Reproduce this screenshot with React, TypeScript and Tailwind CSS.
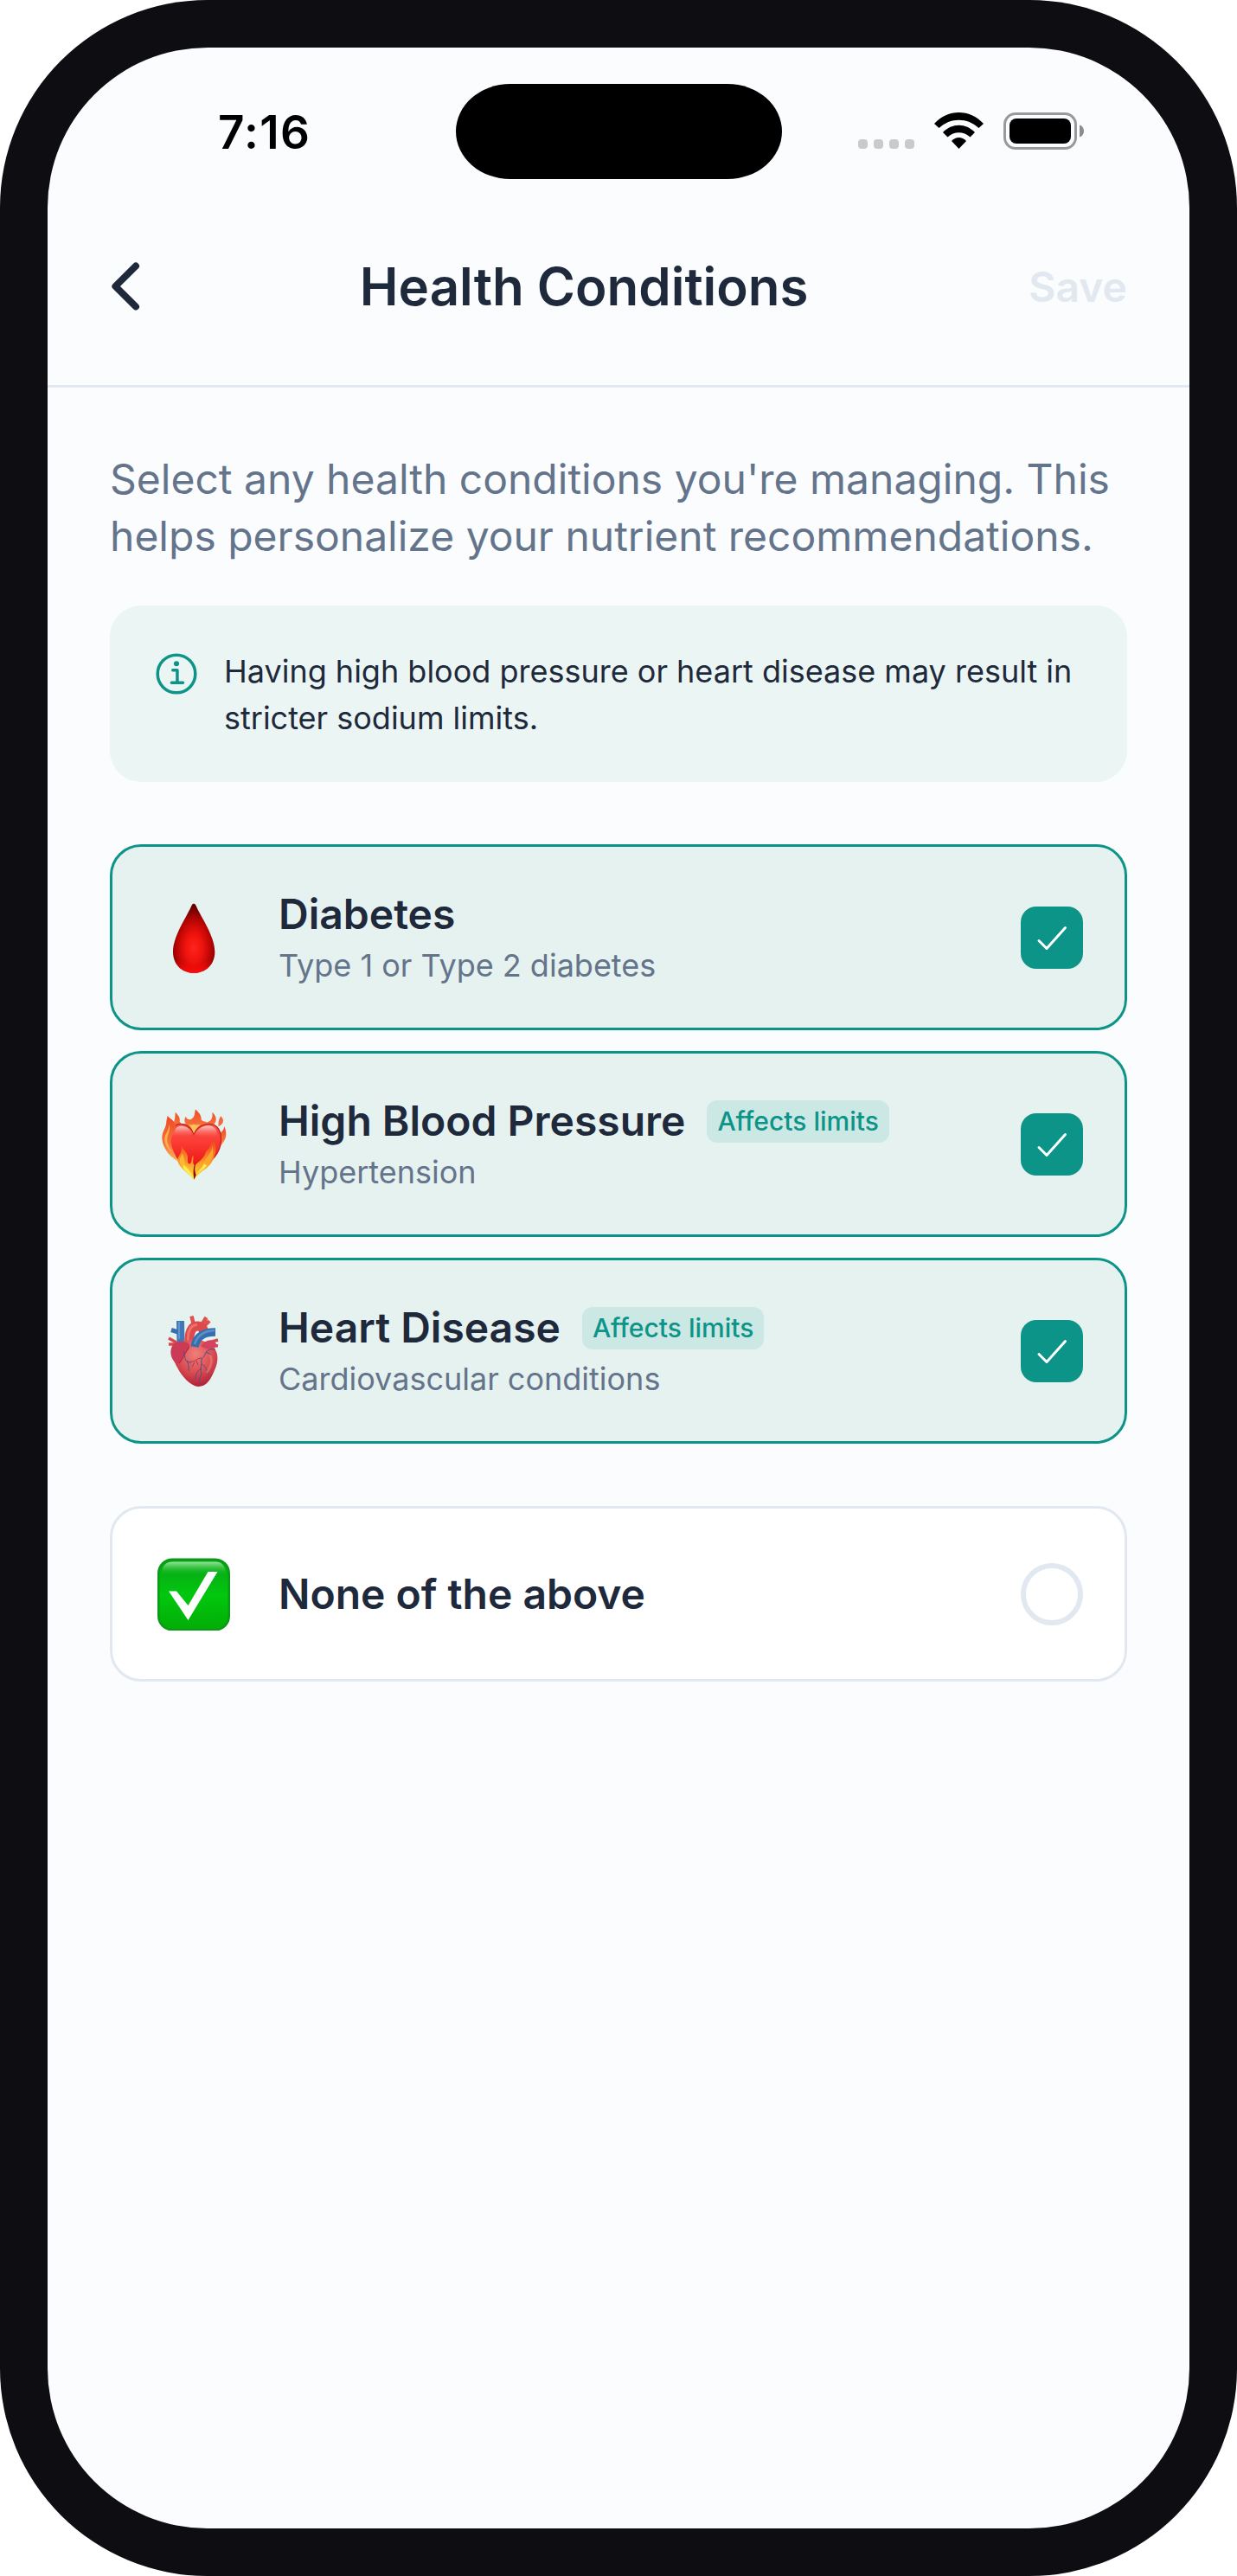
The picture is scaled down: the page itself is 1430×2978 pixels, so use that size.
import type { ReactNode } from "react";

interface Condition {
  name: string;
  description: string;
  icon: ReactNode;
  affectsLimits?: boolean;
}

function BloodDropIcon() {
  return (
    <svg viewBox="36 94.5 252 252" className="size-[84px]">
      <defs>
        <radialGradient id="drop" cx="0.5" cy="0.64" r="0.6">
          <stop offset="0" stopColor="#ff241c" />
          <stop offset="0.35" stopColor="#ee120e" />
          <stop offset="0.68" stopColor="#b80503" />
          <stop offset="1" stopColor="#620000" />
        </radialGradient>
        <linearGradient id="dropBase" x1="0" y1="0" x2="0" y2="1">
          <stop offset="0.82" stopColor="#f80c0a" stopOpacity="0" />
          <stop offset="1" stopColor="#fb0d0b" />
        </linearGradient>
      </defs>
      <path
        d="M155 108C158 101 166 101 169 108C186 148 235 214 235 270C235 314 203 343 162.500 343C122 343 90 314 90 270C90 214 139 146 155 108Z"
        fill="url(#drop)"
      />
      <path
        d="M155 108C158 101 166 101 169 108C186 148 235 214 235 270C235 314 203 343 162.500 343C122 343 90 314 90 270C90 214 139 146 155 108Z"
        fill="url(#dropBase)"
      />
    </svg>
  );
}

function FlamingHeartIcon() {
  return (
    <svg viewBox="36 61.5 252 252" className="size-[84px]">
      <defs>
        <linearGradient id="flame" x1="0" y1="0" x2="0" y2="1">
          <stop offset="0" stopColor="#f04a26" />
          <stop offset="0.6" stopColor="#f6703a" />
          <stop offset="1" stopColor="#fdb75c" />
        </linearGradient>
        <linearGradient id="flameLow" x1="0" y1="0" x2="0" y2="1">
          <stop offset="0" stopColor="#ee3b1c" />
          <stop offset="0.5" stopColor="#fa8a28" />
          <stop offset="1" stopColor="#ffe83d" />
        </linearGradient>
        <linearGradient id="heart" x1="0" y1="0" x2="0" y2="1">
          <stop offset="0" stopColor="#f5544c" />
          <stop offset="0.35" stopColor="#fb3b34" />
          <stop offset="0.7" stopColor="#ee1c1a" />
          <stop offset="1" stopColor="#9c0805" />
        </linearGradient>
        <linearGradient id="gloss" x1="0" y1="0" x2="0" y2="1">
          <stop offset="0" stopColor="#ffd9d6" stopOpacity="0.9" />
          <stop offset="1" stopColor="#ff5a52" stopOpacity="0" />
        </linearGradient>
      </defs>
      {/* flames behind the heart */}
      <path
        d="M92 128C92 112 98 98 98 76C110 88 116 98 113 108L119 116L134 116C128 106 130 98 134 91C138 103 150 104 155 98C168 91 164 78 168 66C179 77 189 86 188 101C191 107 201 107 208 111C222 106 229 99 226 76C238 87 242 98 238 109C234 118 226 122 224 130L162 152Z"
        fill="url(#flame)"
      />
      <path d="M256 89C264 98 266 105 262 113C258 120 252 123 248 125C246 114 248 99 256 89Z" fill="#f16a42" />
      <path d="M268 125C276 142 276 162 267 176C260 190 249 197 239 201L248 148C258 148 266 138 268 125Z" fill="url(#flame)" />
      <path
        d="M162 151C150 117 106 104 89 133C68 168 82 210 108 239C130 261 149 277 162 302C176 277 210 260 234 231C257 203 264 162 248 134C229 103 177 117 162 151Z"
        fill="url(#heart)"
        stroke="#c5201b"
        strokeWidth="4"
      />
      <path d="M158 153C148 124 114 114 97 134C88 147 91 160 101 162C120 165 142 157 158 153Z" fill="url(#gloss)" />
      <path d="M167 153C177 124 216 113 236 132C246 147 244 161 231 165C211 165 184 158 167 153Z" fill="url(#gloss)" />
      <path d="M162 118C150 122 146 118 143 117C152 126 158 137 162 149C168 136 175 126 186 118C176 119 171 122 162 118Z" fill="#fdc159" />
      {/* flame wrapping the left side */}
      <path
        d="M71 88C79 101 95 101 99 123C102 145 82 154 83 178C85 207 101 227 109 247C82 234 56 205 52 169C50 143 68 129 67 107Z"
        fill="url(#flame)"
      />
      <path d="M75 119C86 135 68 155 70 174C72 193 83 209 87 216C68 201 60 184 61 165C64 147 77 138 75 119Z" fill="#fcb04d" />
      {/* flames on the tip */}
      <path
        d="M118 192C125 207 144 217 141 239C140 249 143 257 149 254C158 249 151 235 160 226C163 241 155 250 164 260C178 250 194 238 202 220C208 205 216 205 221 190C227 180 225 172 228 165C239 184 242 206 234 226C230 246 216 263 204 272C187 283 174 293 163 311C153 296 133 285 119 268C105 250 102 239 112 225C120 213 121 203 118 192Z"
        fill="url(#flameLow)"
      />
      <path d="M164 260L170 252C164 266 164 278 170 294L163 310C160 285 160 275 164 260Z" fill="#8e0903" />
      <path d="M121 218C130 229 127 242 133 254C141 270 154 278 158 295C145 279 118 269 113 248C111 235 120 230 121 218Z" fill="#fdb832" />
      <path d="M225 190C230 213 209 227 199 245C189 260 177 267 172 286C191 278 218 258 226 232C231 215 229 204 225 190Z" fill="#fba62c" />
      <path d="M126 259C142 270 154 284 162 306C157 294 145 292 132 278C126 271 123 265 126 259ZM198 254C191 270 178 276 171 290C182 280 200 273 207 260Z" fill="#fff04e" />
    </svg>
  );
}

function AnatomicalHeartIcon() {
  return (
    <svg viewBox="0 0 84 84" className="size-[84px]" fill="none" strokeLinecap="butt">
      <defs>
        <radialGradient id="muscle" cx="0.5" cy="0.3" r="0.72">
          <stop offset="0" stopColor="#ef7f7c" />
          <stop offset="0.55" stopColor="#db4d51" />
          <stop offset="1" stopColor="#ad1d36" />
        </radialGradient>
      </defs>
      {/* small side vessels */}
      <path d="M13 27L22 32M13 34L22 34M63 31L70 29M63 35L70 36" stroke="#d7484c" strokeWidth="3.500" />
      <path d="M26.500 7L27 35" stroke="#4078b8" strokeWidth="9" />
      <path d="M24 20L16 17.500" stroke="#376eae" strokeWidth="5" />
      <path d="M25 8L25 28" stroke="#5f94cc" strokeWidth="2" />
      {/* aortic arch */}
      <path d="M39.500 1.500L42 12M56.500 3L51 12M60 7L54 13" stroke="#e0504d" strokeWidth="4.500" />
      <path d="M37 34C36 20 40 13 46 13C52 13 54 17 54 23" stroke="#dc4a4c" strokeWidth="11" />
      <path d="M35.500 31C34.500 20 38 11.500 46 11.500" stroke="#ee716c" strokeWidth="3" />
      <path
        d="M26 32C37 27 54 27 63 36C71 42 71 54 66 64C62 74 57 83 47 83C38 82 28 71 23 61C17 51 17 40 26 32Z"
        fill="url(#muscle)"
      />
      <path d="M17 36C22 29 31 30 37 34C38 42 31 43 29 51C27 56 24 57 21 56C15 49 14 43 17 36Z" fill="#cb3b56" />
      <path d="M50 36C57 27 66 27 69 36C65 41 55 40 50 36Z" fill="#d54360" />
      <path d="M43 37C45 25 53 20 67 20" stroke="#376eae" strokeWidth="9.500" />
      <path d="M43 34C46 24 54 18.500 66 18" stroke="#5b90c9" strokeWidth="2.500" />
      <path d="M37 37C32 43 30 50 25 56" stroke="#a6263d" strokeWidth="1" />
      <g stroke="#515083" strokeWidth="1">
        <path d="M30 42C33 48 30 51 35 55C37 59 35 63 37 65M34 53L39 56" />
        <path d="M67 40C54 38 57 47 51 51C51 60 49 62 51 69C48 73 48 77 49 79M51 62C45 65 44 70 44 75M51 57C57 60 57 65 59 69M56 43L62 46" />
      </g>
      <path d="M38 54C44 55 45 50 51 50M43 55L40 60M45 53L47 58" stroke="#a62c43" strokeWidth="0.9" />
      <path d="M60 46C65 52 61 61 57 67" stroke="#ed8583" strokeWidth="2.500" opacity="0.55" />
    </svg>
  );
}

function GreenCheckIcon() {
  return (
    <svg viewBox="0 0 84 84" className="size-[84px]">
      <defs>
        <linearGradient id="green" x1="0" y1="0" x2="0" y2="1">
          <stop offset="0" stopColor="#08a318" />
          <stop offset="0.5" stopColor="#02c70e" />
          <stop offset="1" stopColor="#02ad06" />
        </linearGradient>
        <linearGradient id="shine" x1="0" y1="0" x2="0" y2="1">
          <stop offset="0" stopColor="#96e69a" />
          <stop offset="1" stopColor="#1abf26" stopOpacity="0" />
        </linearGradient>
      </defs>
      <rect x="1.250" y="1.750" width="81.500" height="81.500" rx="16" fill="url(#green)" stroke="#0b9a17" strokeWidth="2.500" />
      <path d="M5 20C5 9 9 4.500 18 4.500H66C75 4.500 79 9 79 20Z" fill="url(#shine)" />
      <path d="M13 38.500H22L35.500 55L58.500 16H69.500L35.500 72Z" fill="#fff" />
    </svg>
  );
}

const conditions: Condition[] = [
  {
    name: "Diabetes",
    description: "Type 1 or Type 2 diabetes",
    icon: <BloodDropIcon />,
  },
  {
    name: "High Blood Pressure",
    description: "Hypertension",
    icon: <FlamingHeartIcon />,
    affectsLimits: true,
  },
  {
    name: "Heart Disease",
    description: "Cardiovascular conditions",
    icon: <AnatomicalHeartIcon />,
    affectsLimits: true,
  },
];

function StatusBar() {
  return (
    <div className="relative flex h-[186px] items-start justify-between pt-[67px] pr-[122px] pl-[197px]">
      <span className="-mt-1 text-[53px] leading-[70px] font-semibold tracking-[1.3px] text-black">7:16</span>

      {/* Dynamic island */}
      <div className="absolute top-[42px] left-[472px] h-[110px] w-[377px] rounded-[63px/55px] bg-black" />

      <div className="flex pt-2">
        <div className="flex gap-[7px] pt-[31px]">
          <span className="size-[11px] rounded-[4px] bg-[#c9cacc]" />
          <span className="size-[11px] rounded-[4px] bg-[#c9cacc]" />
          <span className="size-[11px] rounded-[4px] bg-[#c9cacc]" />
          <span className="size-[11px] rounded-[4px] bg-[#c9cacc]" />
        </div>
        <svg viewBox="0 0 57 42" className="ml-[23px] h-[42px] w-[57px]">
          <path d="M0 13C16 -4.300 41 -4.300 57 13L51.500 18C38.500 5.500 18.500 5.500 5.500 18Z" />
          <path d="M10 23C20.500 12 36.500 12 47 23L41.500 28.500C34 21.500 23 21.500 15.500 28.500Z" />
          <path d="M20 33C25 27.700 32 27.700 37 33L28.500 42Z" />
        </svg>
        <svg viewBox="0 0 93 43" className="ml-[23px] h-[43px] w-[93px]">
          <rect x="1.500" y="1.500" width="82" height="40" rx="12.500" fill="none" stroke="#98999b" strokeWidth="3" />
          <rect x="7" y="7" width="71" height="29" rx="8" />
          <path d="M88 14.500C91.300 15.500 93 18.200 93 21.500C93 24.800 91.300 27.500 88 28.500Z" fill="#8b8c8e" />
        </svg>
      </div>
    </div>
  );
}

function ConditionCard({ name, description, icon, affectsLimits }: Condition) {
  return (
    <div className="flex h-[215px] items-center rounded-[36px] border-[3px] border-[#0d9488] bg-[#e6f2f0] px-12">
      <div className="mr-[52px] flex w-[92px] shrink-0 justify-center">{icon}</div>
      <div className="flex-1 pb-px">
        <div className="flex items-center gap-[25px]">
          <h3 className="text-5xl leading-[58px] font-semibold text-[#1e293b]">{name}</h3>
          {affectsLimits && (
            <span className="rounded-xl bg-[#cce8e4] px-3 py-1.5 text-[30px] leading-[37px] font-medium text-[#0d9488]">
              Affects limits
            </span>
          )}
        </div>
        <p className="mt-2 text-4xl leading-[44px] text-[#64748b]">{description}</p>
      </div>
      <div className="size-[72px] rounded-[18px] bg-[#0d9488]">
        <svg viewBox="0 0 72 72" className="size-[72px]" fill="none">
          <path d="M21 39.500L30 48.500L51.500 24.500" stroke="#fff" strokeWidth="3" strokeLinecap="round" strokeLinejoin="round" />
        </svg>
      </div>
    </div>
  );
}

export default function App() {
  return (
    <div className="h-[2978px] w-[1430px] bg-white font-['Inter',sans-serif]">
      <div className="h-full overflow-hidden rounded-[240px] bg-[#0e0e12] p-[55px]">
        <div className="h-full rounded-[185px] bg-[#fbfcfe]">
          <StatusBar />

          <header className="flex h-[207px] items-center justify-between border-b-[3px] border-[#e2e8f0] px-[72px] pb-6">
            <svg viewBox="0 0 36 60" className="h-[60px] w-9" fill="none">
              <path
                d="M30 6.500L6.400 30L30 53.500"
                stroke="#1e293b"
                strokeWidth="8"
                strokeLinecap="round"
                strokeLinejoin="round"
              />
            </svg>
            <h1 className="pr-0.5 text-6xl font-semibold text-[#1e293b]">Health Conditions</h1>
            <button className="pt-px text-5xl font-semibold text-[#e2e8f0]">Save</button>
          </header>

          <main className="px-[72px] pt-[73px]">
            <p className="text-5xl leading-[66px] whitespace-nowrap text-[#64748b]">
              Select any health conditions you're managing. This
              <br />
              helps personalize your nutrient recommendations.
            </p>

            <div className="mt-[47px] flex gap-6 rounded-[36px] bg-[#ebf5f4] px-12 pt-[49px] pb-[47px]">
              <svg viewBox="0 0 512 512" className="-ml-px size-[60px] shrink-0" fill="none" stroke="#0d9488">
                <circle cx="256" cy="256" r="186" strokeWidth="30" />
                <path d="M220 220H264V340M208 344H320" strokeWidth="30" strokeLinecap="round" strokeLinejoin="round" />
                <circle cx="256" cy="156" r="26" fill="#0d9488" stroke="none" />
              </svg>
              <p className="pl-px text-4xl leading-[54px] whitespace-nowrap text-[#1e293b]">
                Having high blood pressure or heart disease may result in
                <br />
                stricter sodium limits.
              </p>
            </div>

            <div className="mt-[72px] flex flex-col gap-6">
              {conditions.map((condition) => (
                <ConditionCard key={condition.name} {...condition} />
              ))}
            </div>

            <div className="mt-[72px] flex h-[203px] items-center rounded-[36px] border-[3px] border-[#e2e8f0] bg-white px-12">
              <div className="mr-[52px] flex w-[92px] shrink-0 justify-center">
                <GreenCheckIcon />
              </div>
              <h3 className="flex-1 text-5xl leading-[58px] font-semibold text-[#1e293b]">None of the above</h3>
              <div className="size-[72px] rounded-full border-[6px] border-[#e2e8f0]" />
            </div>
          </main>
        </div>
      </div>
    </div>
  );
}
